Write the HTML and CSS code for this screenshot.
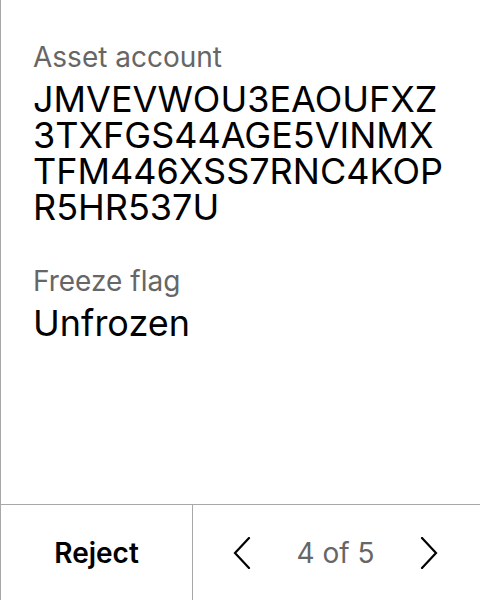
FILE: index.html
```html
<!DOCTYPE html>
<html>
<head>
<meta charset="utf-8">
<link rel="stylesheet" href="styles.css">
</head>
<body>
<div class="screen">
  <main class="content">
    <div class="field">
      <div class="label">Asset account</div>
      <div class="value">JMVEVWOU3EAOUFXZ<br>3TXFGS44AGE5VINMX<br>TFM446XSS7RNC4KOP<br>R5HR537U</div>
    </div>
    <div class="field">
      <div class="label">Freeze flag</div>
      <div class="value">Unfrozen</div>
    </div>
  </main>
  <footer class="footer">
    <div class="reject">Reject</div>
    <div class="pager">
      <svg class="chev" width="18" height="32" viewBox="0 0 18 32"><path d="M16 1 L2 16 L16 31" fill="none" stroke="#000" stroke-width="2.2" stroke-linecap="round" stroke-linejoin="miter"/></svg>
      <span class="count">4 of 5</span>
      <svg class="chev" width="18" height="32" viewBox="0 0 18 32"><path d="M2 1 L16 16 L2 31" fill="none" stroke="#000" stroke-width="2.2" stroke-linecap="round" stroke-linejoin="miter"/></svg>
    </div>
  </footer>
</div>
</body>
</html>
```
FILE: styles.css
```css
html, body {
  margin: 0;
  padding: 0;
  background: #fff;
}
.screen {
  width: 480px;
  height: 600px;
  box-sizing: border-box;
  border-left: 1px solid #a8a8a8;
  display: flex;
  flex-direction: column;
  font-family: Inter, "Noto Sans", sans-serif;
}
.content {
  flex: 1;
  padding: 41px 0 0 32px;
}
.field {
  margin-bottom: 40px;
}
.label {
  font-size: 28px;
  line-height: 32px;
  color: #666;
}
.value {
  font-size: 36px;
  line-height: 36px;
  color: #000;
  margin-top: 8px;
}
.footer {
  height: 96px;
  box-sizing: border-box;
  border-top: 1px solid #a8a8a8;
  display: flex;
}
.reject {
  width: 191px;
  border-right: 1px solid #a8a8a8;
  display: flex;
  align-items: center;
  justify-content: center;
  font-size: 28px;
  font-weight: 600;
  color: #000;
}
.pager {
  flex: 1;
  display: flex;
  align-items: center;
  justify-content: space-between;
  padding: 0 42px 0 40px;
}
.count {
  font-size: 28px;
  color: #666;
}
```
